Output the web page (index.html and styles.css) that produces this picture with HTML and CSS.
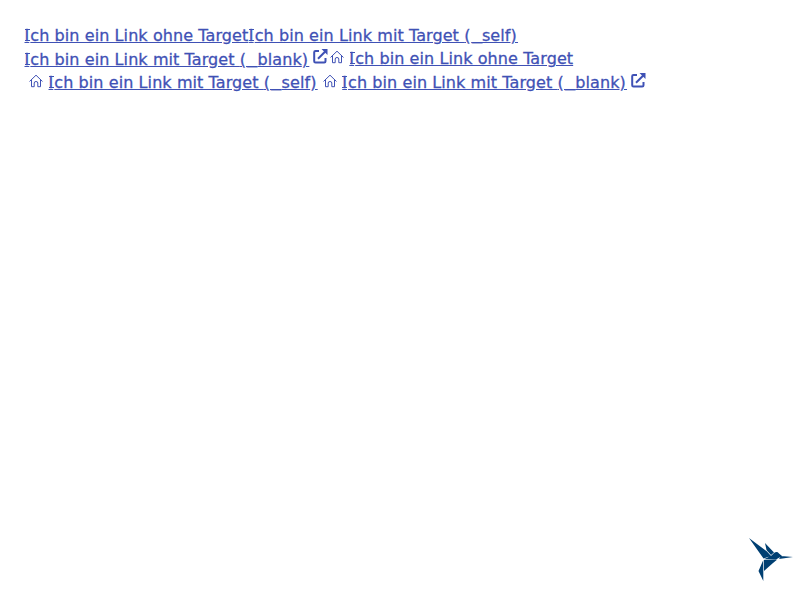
FILE: index.html
```html
<!DOCTYPE html>
<html lang="de">
<head>
<meta charset="utf-8">
<title>Links</title>
<link rel="stylesheet" href="styles.css">
</head>
<body>
<svg class="defs" aria-hidden="true">
<symbol id="house" viewBox="0 0 14 14"><path d="M.8 7.200 7 1.200l6.200 6M2.500 5.800v6.900h2.700V9Q5.200 7.500 7 7.500T8.800 9v3.700h2.700V5.800" fill="none" stroke="currentColor" stroke-width="1" stroke-linejoin="round" stroke-linecap="round"/></symbol>
<symbol id="external" viewBox="0 0 15 15"><path d="M6 2H2.500Q1.200 2 1.200 3.300v8.900Q1.200 13.500 2.500 13.500h8.700Q12.500 13.500 12.500 12.200V9M5 9.700l7.500-7.500" fill="none" stroke="currentColor" stroke-width="2"/><path d="M8.500 0H14.500V6Z" fill="currentColor"/></symbol>
</svg>
<main class="links">
<div class="row first"><a href="#"><span class="cap">I</span>ch bin ein Link ohne Target</a><a href="#"><span class="cap">I</span>ch bin ein Link mit Target <span class="paren">(</span><span class="under">_</span>self<span class="paren">)</span></a></div>
<div class="row second"><a class="low" href="#"><span class="cap">I</span>ch bin ein Link mit Target <span class="paren">(</span><span class="under">_</span>blank<span class="paren">)</span></a><svg class="external"><use href="#external"/></svg><svg class="house tight"><use href="#house"/></svg><a href="#"><span class="cap">I</span>ch bin ein Link ohne Target</a></div>
<div class="row"><svg class="house up"><use href="#house"/></svg><a href="#"><span class="cap">I</span>ch bin ein Link mit Target <span class="paren">(</span><span class="under">_</span>self<span class="paren">)</span></a><svg class="house up"><use href="#house"/></svg><a href="#"><span class="cap">I</span>ch bin ein Link mit Target <span class="paren">(</span><span class="under">_</span>blank<span class="paren">)</span></a><svg class="external"><use href="#external"/></svg></div>
</main>
<svg class="bird" viewBox="0 0 44 44"><g fill="#003f72"><path d="M0 0 18 13.500 22 18 14.500 20.500ZM16 5 25 14.500 22 17 17.500 12ZM22.500 17.500 25 15Q28 13 30 15.500L33 18 27 21.500 15 21.200ZM32 18 44 19 30 21ZM15 22 28 21.800 24 25 15 33ZM14.300 22V43L9.500 33Z"/></g></svg>
</body>
</html>
```
FILE: styles.css
```css
body{margin:0;padding:24px;font:16px/23px Verdana,"DejaVu Sans",sans-serif;letter-spacing:.085px;color:#3f51b5;background:#fff}
.defs{position:absolute;width:0;height:0}
.row{display:flex;height:24px;white-space:nowrap}
.first{height:23px}
a{color:inherit;-webkit-text-stroke:.3px currentColor}
.cap{padding:0 1px 0 .5px;background:linear-gradient(currentColor,currentColor) center 3px/5px 1px no-repeat,linear-gradient(currentColor,currentColor) center 14px/5px 1px no-repeat}
.paren{letter-spacing:1.300px}
.under{display:inline-block;width:10.200px;transform:translateY(-2px) scaleX(1.270);transform-origin:left}
.low{padding-top:1px}
.house{width:14px;height:14px;margin:4px 5px 0}
.up{margin-top:3px}
.external{width:15px;height:15px;margin:2px 3px 0 3.500px}
.tight{margin-left:-1px;margin-top:3px}
.bird{position:fixed;left:749px;top:538px;width:44px;height:44px}
```
